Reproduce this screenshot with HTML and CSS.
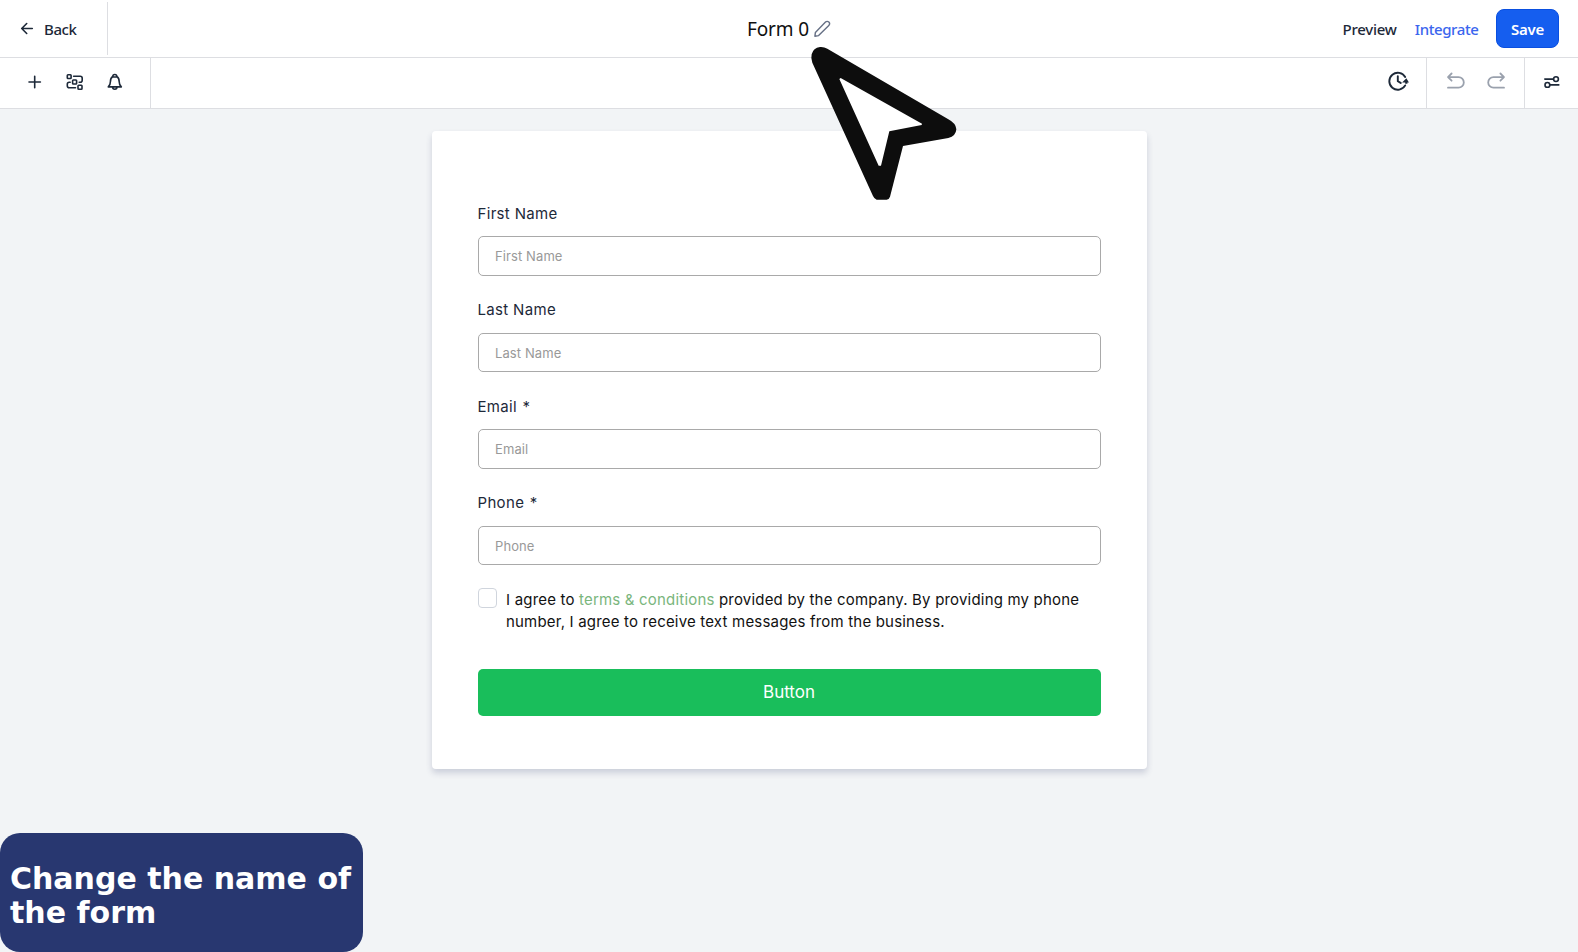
FILE: index.html
```html
<!DOCTYPE html>
<html lang="en">
<head>
<meta charset="utf-8">
<title>Form 0</title>
<link rel="stylesheet" href="styles.css">
</head>
<body>
<header class="header">
  <div class="back">
    <svg class="icon" width="14" height="14" viewBox="0 0 14 14"><path d="M12.300 7.500H1.700M6.700 2.500l-5 5 5 5"/></svg>
    <span class="back-label">Back</span>
  </div>
  <div class="title">
    <span class="title-text">Form 0</span>
    <svg class="icon pencil" width="18" height="18" viewBox="0 0 18 18"><path d="M1.900 16.200l.5-3.800L12.500 2.100a2.300 2.300 0 0 1 3.300 3.300L5.600 15.600z"/></svg>
  </div>
  <div class="actions">
    <span class="preview">Preview</span>
    <span class="integrate">Integrate</span>
    <button class="save">Save</button>
  </div>
</header>
<nav class="toolbar">
  <div class="tools">
    <svg class="icon" width="20" height="20" viewBox="0 0 20 20"><path d="M9.700 4.300v11.400M4 10h11.400"/></svg>
    <svg class="icon" width="20" height="20" viewBox="0 0 20 20"><rect x="2.300" y="2.700" width="3.800" height="3.800" rx=".7"/><rect x="7.600" y="8" width="4" height="4" rx=".7"/><rect x="13" y="13.300" width="4" height="4" rx=".7"/><path d="M8.600 4.300h6.600a2 2 0 0 1 2 2v2a2 2 0 0 1-2 2h-1M5.200 10.200H4.300a2 2 0 0 0-2 2v1.600a2 2 0 0 0 2 2h6.200"/></svg>
    <svg class="icon" width="20" height="20" viewBox="0 0 20 20"><path d="M9.800 2.500a2 2 0 0 1 2 2c1.700 1.100 2.400 2.700 2.400 5.200 0 2.400.6 3.700 2.100 5.200h-13c1.500-1.500 2.100-2.800 2.100-5.200 0-2.500.7-4.100 2.400-5.200a2 2 0 0 1 2-2zM7.800 5h4M7.600 15.100a2.200 2.200 0 0 0 4.400 0"/></svg>
  </div>
  <div class="tool-group history">
    <svg class="icon heavy" width="22" height="22" viewBox="0 0 22 22"><path d="M18.200 7A8.500 8.500 0 1 0 18.200 15.400M10.800 6.200v5l2.900 1.700"/><path class="solid" d="M15.100 12.500l4.300-4.200 2.500 4.200h-1.500v1.200h-2.200v-1.200z"/></svg>
  </div>
  <div class="tool-group undo-redo">
    <svg class="icon faded" width="20" height="20" viewBox="0 0 20 20"><path d="M5.600 1.500L2 5.100l3.600 3.600M2 5.100h10.500a5.300 5.300 0 0 1 0 10.600H2"/></svg>
    <svg class="icon faded" width="20" height="20" viewBox="0 0 20 20"><path d="M14.400 1.500L18 5.100l-3.600 3.600M18 5.100H7.500a5.300 5.300 0 0 0 0 10.600H18"/></svg>
  </div>
  <div class="tool-group settings">
    <svg class="icon" width="16" height="14" viewBox="0 0 16 14"><path d="M.8 4.100h8.600M6.200 9.900h8.600"/><circle cx="12" cy="4.100" r="2.400"/><circle cx="3.400" cy="9.900" r="2.400"/></svg>
  </div>
</nav>
<main class="canvas">
  <form class="card">
    <label class="field"><span class="label">First Name</span><input class="input" placeholder="First Name"></label>
    <label class="field"><span class="label">Last Name</span><input class="input" placeholder="Last Name"></label>
    <label class="field"><span class="label">Email <span class="star">*</span></span><input class="input" placeholder="Email"></label>
    <label class="field"><span class="label">Phone <span class="star">*</span></span><input class="input" placeholder="Phone"></label>
    <div class="consent">
      <span class="checkbox"></span>
      <p class="consent-text">I agree to <a class="terms">terms &amp; conditions</a> provided by the company. By providing my phone<br>number, I agree to receive text messages from the business.</p>
    </div>
    <button class="submit" type="button">Button</button>
  </form>
</main>
<div class="caption">Change the name of<br>the form</div>
<svg class="pointer" width="150" height="156" viewBox="0 0 450 468">
  <path d="M17 25Q22 5 42 3Q54 2 64 8L427 220Q450 232 451 250Q450 270 427 276L291 300L252 452Q249 461 242 461L212 461Q205 459 201 450L19 50Q14 37 17 25Z" fill="#0d0d0d"/>
  <path d="M100 99L104 96L348 233L347 237L250 256L225 359L218 359Z" fill="#fff"/>
</svg>
</body>
</html>
```

FILE: styles.css
```css
* { box-sizing: border-box; }
body {
  margin: 0;
  height: 952px;
  overflow: hidden;
  display: flex;
  flex-direction: column;
  background: #f2f4f6;
  color: #1d2939;
  font-family: "Noto Sans", sans-serif;
}
.icon { fill: none; stroke: #1d2939; stroke-width: 1.6; stroke-linecap: round; stroke-linejoin: round; flex: none; }
.icon .solid { fill: #1d2939; stroke: none; }
.heavy { stroke-width: 1.9; }
.faded { stroke: #9aa1ad; stroke-width: 1.8; }

.header {
  height: 58px;
  flex: none;
  display: grid;
  grid-template-columns: 1fr auto 1fr;
  align-items: center;
  background: #fff;
  border-bottom: 1px solid #dddee2;
}
.back {
  width: 108px;
  height: 53px;
  margin-bottom: 1px;
  padding-left: 20px;
  display: flex;
  align-items: center;
  gap: 10px;
  border-right: 1px solid #dddee2;
}
.back-label { font-size: 15px; font-weight: 500; padding-top: 2px; letter-spacing: -.4px; }
.title { display: flex; align-items: center; gap: 4px; color: #101010; }
.title-text { font-size: 19px; line-height: 26px; letter-spacing: -.15px; }
.pencil { stroke: #667085; stroke-width: 1.4; }
.actions {
  display: flex;
  justify-content: flex-end;
  align-items: center;
  padding-right: 19px;
  font-size: 15px;
  font-weight: 500;
}
.preview { margin-right: 18px; letter-spacing: -.25px; }
.integrate { margin-right: 17.5px; color: #3b66ee; letter-spacing: -.4px; }
.save {
  width: 63px;
  height: 39px;
  padding: 0;
  border: 1px solid #0a4fe0;
  border-radius: 8px;
  background: #155eef;
  color: #fff;
  font: 600 15px "Noto Sans", sans-serif;
  letter-spacing: -.3px;
}

.toolbar {
  height: 51px;
  flex: none;
  display: flex;
  background: #fff;
  border-bottom: 1px solid #dddee2;
}
.tools {
  width: 151px;
  padding-left: 25px;
  padding-bottom: 3px;
  display: flex;
  align-items: center;
  gap: 20px;
  border-right: 1px solid #dddee2;
}
.tool-group { display: flex; align-items: center; justify-content: center; padding-bottom: 2px; }
.history { margin-left: auto; width: 57px; padding-bottom: 4px; }
.undo-redo { width: 99px; gap: 20px; border: solid #dddee2; border-width: 0 1px; }
.settings { width: 53px; padding-left: 1px; }

.canvas { flex: 1; padding-top: 22px; }
.card {
  width: 715px;
  height: 638px;
  margin: 0 auto;
  padding: 71px 46px 0;
  background: #fff;
  border-radius: 4px;
  box-shadow: 0 4px 6px rgba(50, 60, 110, .2);
  font-family: Inter, sans-serif;
}
.field { display: block; height: 96.4px; }
.label {
  display: block;
  height: 34.4px;
  line-height: 23px;
  font-size: 15px;
  letter-spacing: .33px;
}
.star { margin-left: 1px; }
.input {
  display: block;
  width: 623px;
  height: 39.4px;
  padding: .5px 16.5px 0;
  border: 1px solid #a9a9a9;
  border-radius: 5px;
  font: 13px Inter, sans-serif;
  letter-spacing: .1px;
}
.input::placeholder { color: #999; opacity: 1; }
.consent { display: flex; gap: 9.5px; height: 81px; }
.checkbox { width: 19px; height: 20px; border: 1px solid #d0d5dd; border-radius: 4px; }
.consent-text { margin: 0; padding-top: 1px; line-height: 22px; font-size: 15px; letter-spacing: .19px; color: #111; white-space: nowrap; }
.terms { color: #7ab67d; }
.submit {
  width: 623px;
  height: 47px;
  padding: 0;
  border: 0;
  border-radius: 5px;
  background: #19be5b;
  color: #fff;
  font: 17px Inter, sans-serif;
}

.caption {
  position: absolute;
  left: 0;
  bottom: 0;
  width: 363px;
  height: 119px;
  padding: 29px 10px;
  border-radius: 20px;
  background: #283770;
  color: #fff;
  font: bold 30px/34px "DejaVu Sans", sans-serif;
  white-space: nowrap;
}
.pointer { position: absolute; left: 806px; top: 46px; overflow: visible; }
```
